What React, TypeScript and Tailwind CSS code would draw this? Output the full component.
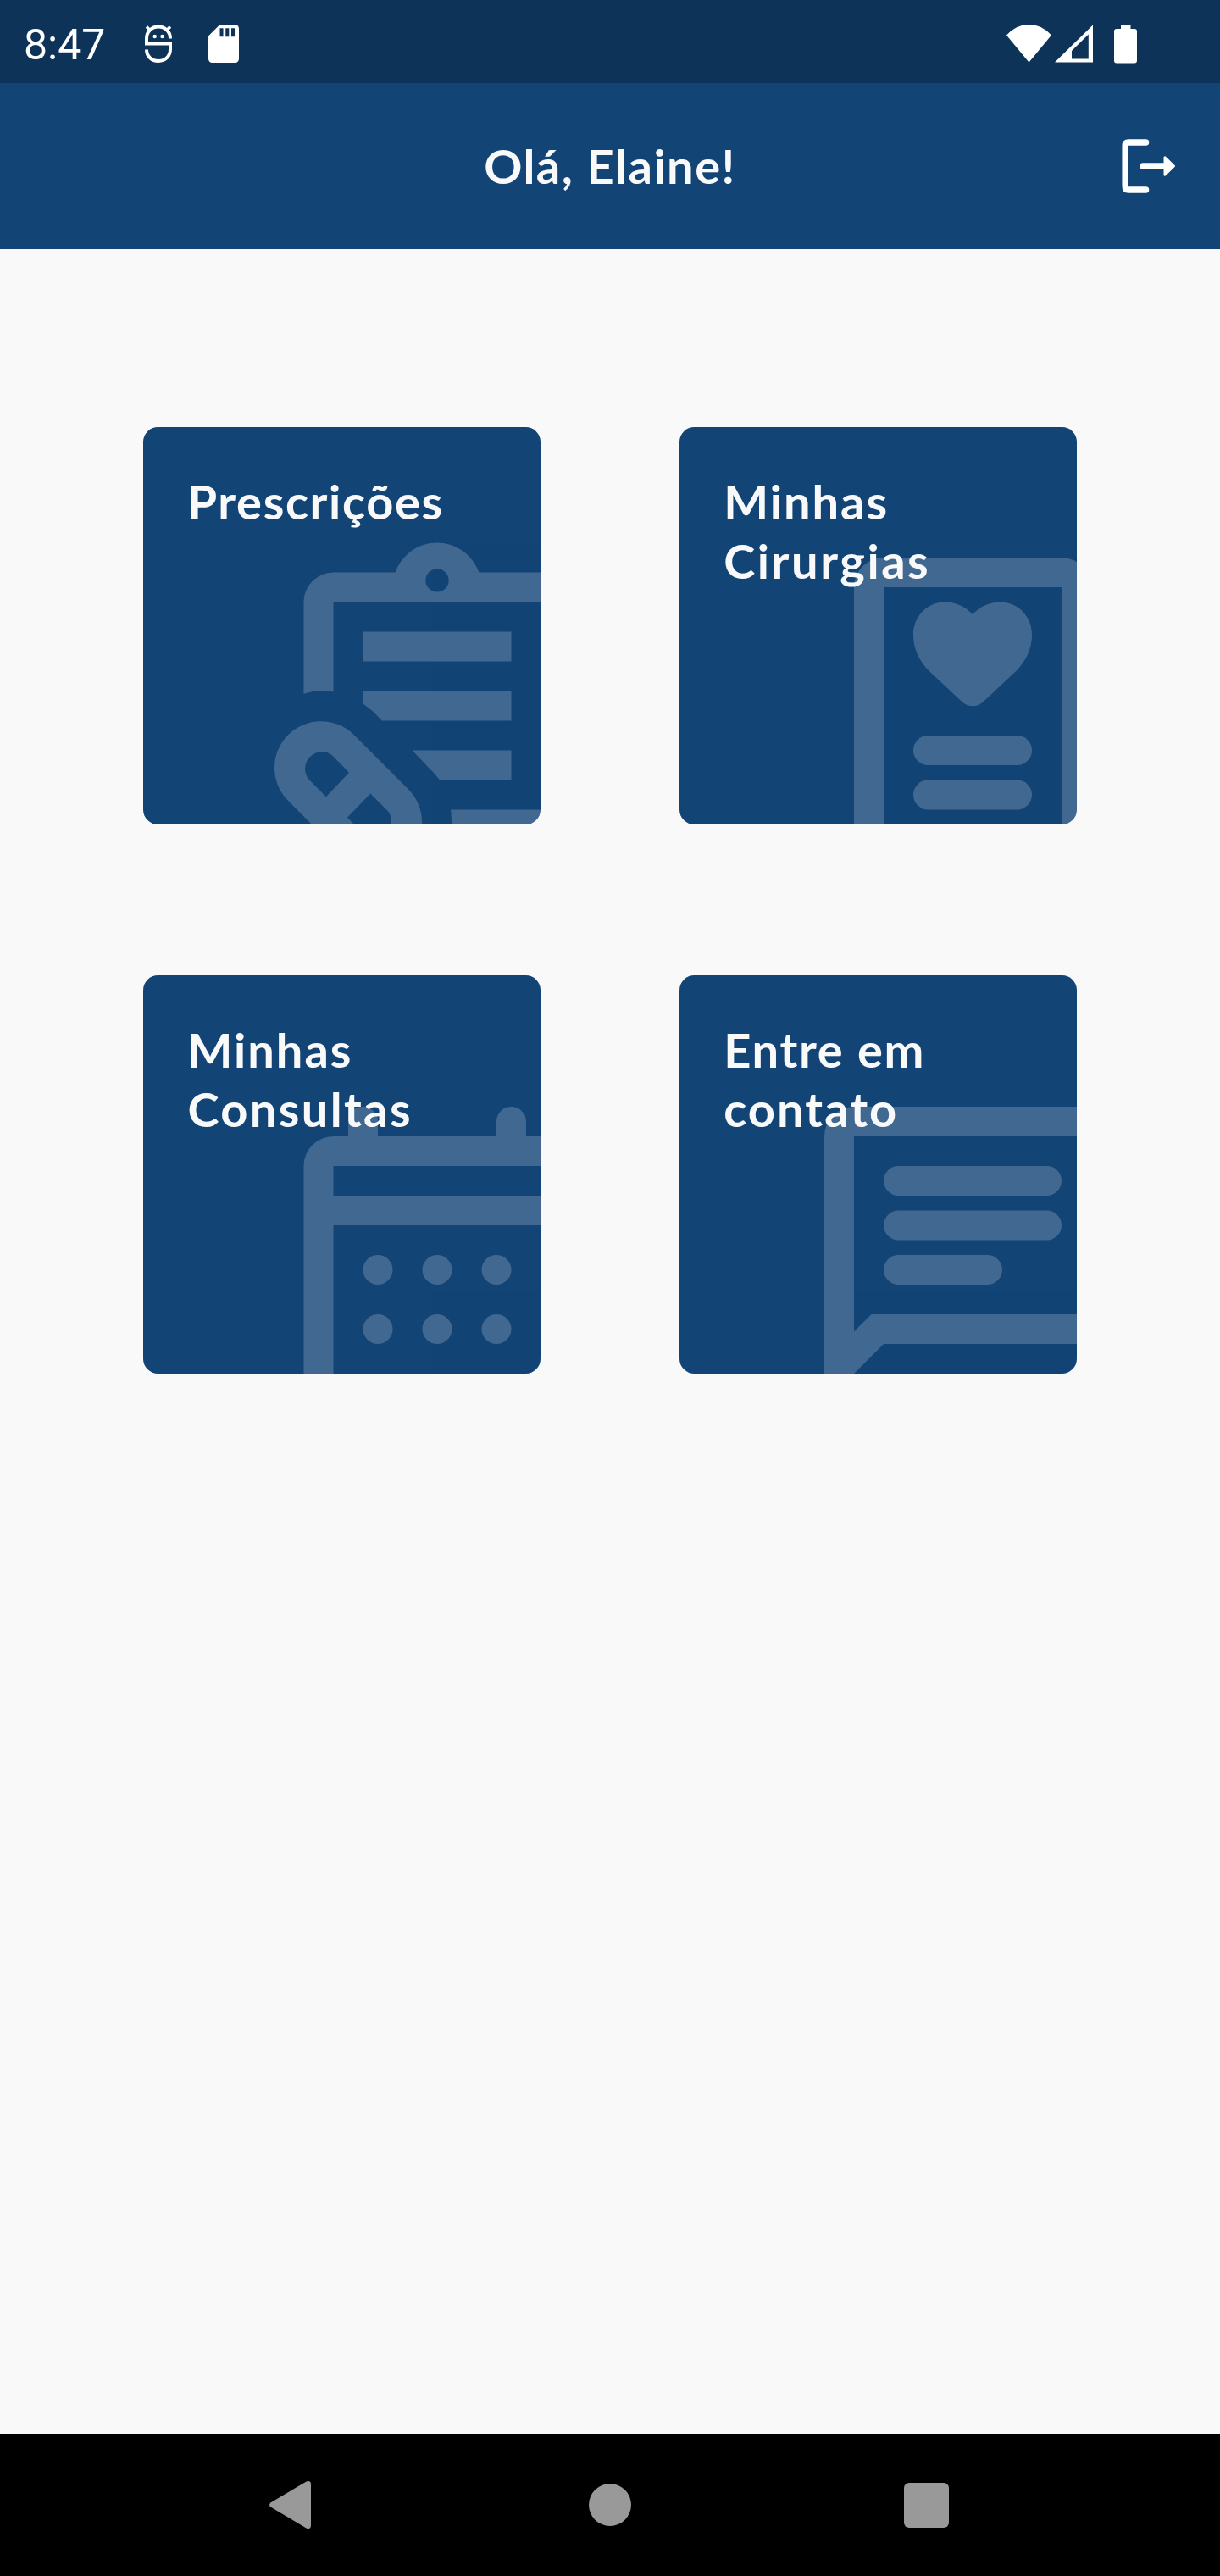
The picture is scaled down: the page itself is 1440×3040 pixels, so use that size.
import type { ReactNode } from "react";

type Line = { text: string; tracking: string };

const cards: { lines: Line[]; icon: ReactNode }[] = [
  {
    lines: [{ text: "Prescrições", tracking: "tracking-[1.65px]" }],
    icon: (
      <>
        <path
          fillRule="evenodd"
          d="M3 11.18V5a2 2 0 0 1 2-2h4.18C9.6 1.84 10.7 1 12 1s2.4.84 2.82 2H19a2 2 0 0 1 2 2H5v6.05Q4 10.88 3 11.18ZM12 2.76a.78.78 0 1 0 0 1.56.78.78 0 1 0 0-1.56Z"
        />
        <path d="M7 7h10v2H7ZM7 11h10v2H8.27L7.7 12.4 7 11.86ZM10.32 15H17v2h-4.82q-.3-.4-.71-.78ZM12.92 19H21v3h-8.05q.1-1.5-.03-3Z" />
        <path
          fillRule="evenodd"
          d="M1.91 18.36A3.14 3.14 0 0 1 6.35 13.92L10.09 17.66A3.14 3.14 0 0 1 5.65 22.1ZM3.33 16.94 4.51 18.13 6.06 16.5 4.93 15.34A1.14 1.14 0 0 0 3.33 16.94ZM7.5 17.92 5.94 19.53 7.07 20.68A1.14 1.14 0 0 0 8.67 19.08Z"
        />
      </>
    ),
  },
  {
    lines: [
      { text: "Minhas", tracking: "tracking-[2px]" },
      { text: "Cirurgias", tracking: "tracking-[2.55px]" },
    ],
    icon: (
      <>
        <path
          fillRule="evenodd"
          d="M6 2h12a2 2 0 0 1 2 2v18H4V4a2 2 0 0 1 2-2ZM6 4v18h12V4Z"
        />
        <path d="M12 5.83C11.5 5.3 10.85 5 10.13 5 8.95 5 8 5.95 8 7.2 8 8 8.3 8.85 9 9.58L11.3 11.74Q12 12.3 12.7 11.74L15 9.58C15.7 8.85 16 8 16 7.2 16 5.95 15.05 5 13.87 5 13.15 5 12.5 5.3 12 5.83Z" />
        <rect x="8" y="14" width="8" height="2" rx="1" />
        <rect x="8" y="17" width="8" height="2" rx="1" />
      </>
    ),
  },
  {
    lines: [
      { text: "Minhas", tracking: "tracking-[2px]" },
      { text: "Consultas", tracking: "tracking-[2.35px]" },
    ],
    icon: (
      <>
        <path
          fillRule="evenodd"
          d="M5 4h1V3a1 1 0 0 1 2 0v1h8V3a1 1 0 0 1 2 0v1h3v18H3V6a2 2 0 0 1 2-2ZM5 6v2h16V6ZM5 10v12h16V10Z"
        />
        <circle cx="8" cy="13" r="1" />
        <circle cx="12" cy="13" r="1" />
        <circle cx="16" cy="13" r="1" />
        <circle cx="8" cy="17" r="1" />
        <circle cx="12" cy="17" r="1" />
        <circle cx="16" cy="17" r="1" />
      </>
    ),
  },
  {
    lines: [
      { text: "Entre em", tracking: "tracking-[1.75px]" },
      { text: "contato", tracking: "tracking-[2.1px]" },
    ],
    icon: (
      <>
        <path
          fillRule="evenodd"
          d="M4 2h18v16H6l-4 4V4a2 2 0 0 1 2-2ZM4 4v13.17L5.17 16H22V4Z"
        />
        <rect x="6" y="6" width="12" height="2" rx="1" />
        <rect x="6" y="9" width="12" height="2" rx="1" />
        <rect x="6" y="12" width="8" height="2" rx="1" />
      </>
    ),
  },
];

function StatusBar() {
  return (
    <div className="flex h-[98px] items-center justify-between bg-[#0e3358] pr-[98px] pl-7 text-white">
      <div className="flex items-center">
        <span className="w-[143px] pt-2 font-['Roboto',sans-serif] text-[50px] leading-none">
          8:47
        </span>
        <svg className="mt-[5px] h-[46px] w-8" viewBox="0 0 32 46" fill="none" stroke="currentColor">
          <path
            strokeWidth="4"
            d="M30 16.5C30 8 23.5 2.5 16 2.5S2 8 2 16.5V22.5H30V29C30 37.5 24 43 16 43S2 37.5 2 29.5"
          />
          <path strokeWidth="3.5" d="M2 2.5 7 7.5M30 2.5 25 7.5" />
          <circle cx="11.7" cy="14" r="2.2" fill="currentColor" stroke="none" />
          <circle cx="20.5" cy="14" r="2.2" fill="currentColor" stroke="none" />
        </svg>
        <svg className="mt-[5px] ml-[43px] h-[45px] w-9" viewBox="4 2 16 20" fill="currentColor">
          <path
            fillRule="evenodd"
            d="M18 2h-8L4 8v12c0 1.1.9 2 2 2h12c1.1 0 2-.9 2-2V4c0-1.1-.9-2-2-2ZM10 3.9v4.4h1.8V3.9ZM13 3.9v4.4h1.8V3.9ZM16 3.9v4.4h1.8V3.9Z"
          />
        </svg>
      </div>
      <div className="flex items-center pt-[5px]">
        <svg className="h-[46px] w-[53px]" viewBox="0 0 53 46" fill="currentColor">
          <path d="M0 12.5Q11 0 26.5 0T53 12.5L26.5 44.5Z" />
        </svg>
        <svg className="ml-1 h-[46px] w-[45px]" viewBox="0 0 45 46" fill="currentColor">
          <path fillRule="evenodd" d="M45 .5V44.5H0ZM20 31V40.5H39.8V11.5Z" />
        </svg>
        <svg className="ml-[25px] h-[46px] w-[27px]" viewBox="0 0 27 46" fill="currentColor">
          <path d="M8 0h11.5v5H24a3 3 0 0 1 3 3v34.5a3 3 0 0 1-3 3H3a3 3 0 0 1-3-3V8a3 3 0 0 1 3-3h5Z" />
        </svg>
      </div>
    </div>
  );
}

function Header() {
  return (
    <header className="grid h-[196px] grid-cols-[1fr_auto_1fr] items-center bg-[#124476] px-[52px]">
      <div />
      <h1 className="text-[56px] leading-[70px] font-bold tracking-[1.5px] text-[#f9f9f9]">
        Olá, Elaine!
      </h1>
      <button className="justify-self-end text-white">
        <svg className="h-16 w-16" viewBox="0 0 64 64" fill="none" stroke="currentColor">
          <path
            strokeWidth="7.5"
            strokeLinecap="round"
            strokeLinejoin="round"
            d="M28.5 4H8Q4.2 4 4.2 8V56Q4.2 60 8 60H28.5M25 32H52"
          />
          <path fill="currentColor" strokeWidth="3" strokeLinejoin="round" d="M51 21.8V42.2L61.5 32Z" />
        </svg>
      </button>
    </header>
  );
}

export default function App() {
  return (
    <div className="flex h-[3040px] w-[1440px] flex-col bg-[#f9f9f9] font-['Lato',sans-serif]">
      <StatusBar />
      <Header />
      <main className="grid flex-1 grid-cols-[469.3px_469.3px] content-start gap-x-[163.4px] gap-y-[178.1px] pt-[210px] pl-[169px]">
        {cards.map((card, i) => (
          <section
            key={i}
            className="relative h-[469.3px] overflow-hidden rounded-[17.5px] bg-[#124476] px-[52.5px] pt-[52.5px]"
          >
            <svg
              className="absolute top-[119.3px] left-[136.5px] h-[420px] w-[420px] text-[#f9f9f9] opacity-20"
              viewBox="0 0 24 24"
              fill="currentColor"
            >
              {card.icon}
            </svg>
            <h2 className="relative text-[56px] leading-[70px] font-bold text-[#f9f9f9]">
              {card.lines.map((line) => (
                <span key={line.text} className={`block whitespace-nowrap ${line.tracking}`}>
                  {line.text}
                </span>
              ))}
            </h2>
          </section>
        ))}
      </main>
      <nav className="flex h-[168px] items-center bg-black text-[#999999]">
        <svg className="ml-[318px] h-14 w-[49px]" viewBox="0 0 49 56" fill="currentColor">
          <path d="M43.5.6Q49-1.500 49 4V52Q49 57.5 43.5 55.4L1.8 30.8Q-1.800 28 1.8 25.2Z" />
        </svg>
        <div className="ml-[328px] size-[50px] rounded-full bg-[#999999]" />
        <div className="ml-[322px] size-[53px] rounded-md bg-[#999999]" />
      </nav>
    </div>
  );
}
